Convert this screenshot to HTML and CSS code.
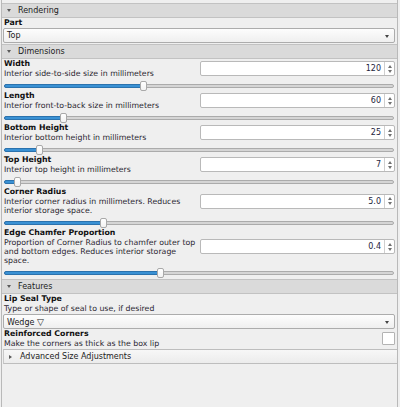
FILE: index.html
```html
<!DOCTYPE html>
<html>
<head>
<meta charset="utf-8">
<link rel="stylesheet" href="styles.css">
</head>
<body>
<div class="panel">
  <div class="ghead"><span class="tri-down"></span>Rendering</div>
  <div class="gbody">
    <div class="label">Part</div>
    <div class="select"><span>Top</span><span class="caret"></span></div>
  </div>

  <div class="ghead"><span class="tri-down"></span>Dimensions</div>
  <div class="gbody">
    <div class="row">
      <div class="text">
        <div class="label">Width</div>
        <div class="desc">Interior side-to-side size in millimeters</div>
      </div>
      <div class="spin"><span class="val">120</span><span class="arrows"><i class="up"></i><i class="dn"></i></span></div>
    </div>
    <div class="slider"><div class="track"><div class="fill" style="width:35.9%"></div><div class="handle" style="left:35.9%"></div></div></div>

    <div class="row">
      <div class="text">
        <div class="label">Length</div>
        <div class="desc">Interior front-to-back size in millimeters</div>
      </div>
      <div class="spin"><span class="val">60</span><span class="arrows"><i class="up"></i><i class="dn"></i></span></div>
    </div>
    <div class="slider"><div class="track"><div class="fill" style="width:15.1%"></div><div class="handle" style="left:15.1%"></div></div></div>

    <div class="row">
      <div class="text">
        <div class="label">Bottom Height</div>
        <div class="desc">Interior bottom height in millimeters</div>
      </div>
      <div class="spin"><span class="val">25</span><span class="arrows"><i class="up"></i><i class="dn"></i></span></div>
    </div>
    <div class="slider"><div class="track"><div class="fill" style="width:9.1%"></div><div class="handle" style="left:9.1%"></div></div></div>

    <div class="row">
      <div class="text">
        <div class="label">Top Height</div>
        <div class="desc">Interior top height in millimeters</div>
      </div>
      <div class="spin"><span class="val">7</span><span class="arrows"><i class="up"></i><i class="dn"></i></span></div>
    </div>
    <div class="slider"><div class="track"><div class="fill" style="width:3.3%"></div><div class="handle" style="left:3.3%"></div></div></div>

    <div class="row">
      <div class="text">
        <div class="label">Corner Radius</div>
        <div class="desc">Interior corner radius in millimeters. Reduces interior storage space.</div>
      </div>
      <div class="spin"><span class="val">5.0</span><span class="arrows"><i class="up"></i><i class="dn"></i></span></div>
    </div>
    <div class="slider"><div class="track"><div class="fill" style="width:25.6%"></div><div class="handle" style="left:25.6%"></div></div></div>

    <div class="row">
      <div class="text">
        <div class="label">Edge Chamfer Proportion</div>
        <div class="desc">Proportion of Corner Radius to chamfer outer top and bottom edges. Reduces interior storage space.</div>
      </div>
      <div class="spin"><span class="val">0.4</span><span class="arrows"><i class="up"></i><i class="dn"></i></span></div>
    </div>
    <div class="slider"><div class="track"><div class="fill" style="width:40.1%"></div><div class="handle" style="left:40.1%"></div></div></div>
  </div>

  <div class="ghead"><span class="tri-down"></span>Features</div>
  <div class="gbody feat">
    <div class="label">Lip Seal Type</div>
    <div class="desc">Type or shape of seal to use, if desired</div>
    <div class="select lip"><span>Wedge <span class="glyph">▽</span></span><span class="caret"></span></div>
    <div class="row">
      <div class="text">
        <div class="label">Reinforced Corners</div>
        <div class="desc">Make the corners as thick as the box lip</div>
      </div>
      <div class="check"></div>
    </div>
  </div>
  <div class="adv"><span class="tri-right"></span>Advanced Size Adjustments</div>
</div>
</body>
</html>
```
FILE: styles.css
```css
html, body {
  margin: 0;
  padding: 0;
  background: #efefef;
}
body {
  font-family: "DejaVu Sans", sans-serif;
  font-size: 7.8px;
  color: #222;
}
.panel {
  box-sizing: border-box;
  margin-left: 1px;
  width: 397px;
  height: 407px;
  padding-top: 3px;
  border-left: 1px solid #b9b9b9;
  border-right: 1px solid #b9b9b9;
}
.ghead {
  box-sizing: border-box;
  height: 15px;
  line-height: 13px;
  background: #dadada;
  border: 1px solid #c2c2c2;
  border-left: none;
  border-right: none;
  display: flex;
  align-items: center;
  padding-left: 5px;
  color: #222;
  font-size: 8px;
}
.tri-down {
  width: 0;
  height: 0;
  border-left: 2.5px solid transparent;
  border-right: 2.5px solid transparent;
  border-top: 3px solid #5a5a5a;
  margin-right: 7px;
}
.tri-right {
  width: 0;
  height: 0;
  border-top: 2.5px solid transparent;
  border-bottom: 2.5px solid transparent;
  border-left: 3px solid #5a5a5a;
  margin-right: 8px;
}
.gbody {
  padding: 0 2px 1px 1px;
}
.text {
  min-width: 0;
}
.label {
  font-weight: bold;
  line-height: 10px;
  padding-left: 1px;
  color: #111;
}
.desc {
  line-height: 9px;
  padding-left: 1px;
  color: #2a2630;
}
.select {
  box-sizing: border-box;
  height: 15px;
  border: 1px solid #acacac;
  border-radius: 2px;
  background: linear-gradient(#fdfdfd, #efefef);
  display: flex;
  align-items: center;
  justify-content: space-between;
  padding: 0 5px 0 3px;
  color: #1a1a1a;
  font-size: 8px;
}
.select.lip {
  margin-top: 1px;
}
.glyph {
  font-size: 9px;
}
.caret {
  width: 0;
  height: 0;
  border-left: 2.5px solid transparent;
  border-right: 2.5px solid transparent;
  border-top: 3px solid #444;
  margin-top: 1px;
}
.row {
  display: grid;
  grid-template-columns: 1fr 195px;
  align-items: center;
}
.spin {
  box-sizing: border-box;
  height: 15px;
  border: 1px solid #b9b9b9;
  border-radius: 2px;
  background: #fff;
  display: flex;
  justify-content: flex-end;
  align-items: stretch;
}
.spin .val {
  line-height: 13px;
  padding-right: 3px;
  color: #1e1e40;
  font-size: 8px;
}
.arrows {
  width: 9px;
  border-left: 1px solid #cfcfcf;
  display: flex;
  flex-direction: column;
  align-items: center;
  justify-content: center;
  gap: 2px;
}
.arrows i {
  display: block;
  width: 0;
  height: 0;
  border-left: 2.5px solid transparent;
  border-right: 2.5px solid transparent;
}
.arrows .up {
  border-bottom: 3px solid #707070;
}
.arrows .dn {
  border-top: 3px solid #707070;
}
.slider {
  height: 13px;
  padding: 6px 1px 0 1px;
  box-sizing: border-box;
}
.track {
  position: relative;
  box-sizing: border-box;
  height: 4px;
  border: 1px solid #ababab;
  border-radius: 2px;
  background: #d5d5d5;
}
.fill {
  position: absolute;
  left: -1px;
  top: -1px;
  height: 4px;
  box-sizing: border-box;
  border: 1px solid #2b72ad;
  border-radius: 2px;
  background: #3a91d4;
}
.handle {
  position: absolute;
  top: -4px;
  width: 7px;
  height: 10px;
  margin-left: -4px;
  box-sizing: border-box;
  border: 1px solid #a9a9a9;
  border-radius: 2px;
  background: linear-gradient(#ffffff, #f2f2f2);
}
.check {
  justify-self: end;
  width: 13px;
  height: 13px;
  box-sizing: border-box;
  border: 1px solid #b3b3b3;
  border-radius: 1px;
  background: #fff;
}
.adv {
  box-sizing: border-box;
  height: 15px;
  margin-left: 1px;
  background: linear-gradient(#f7f7f7, #ececec);
  border-top: 1px solid #bdbdbd;
  border-bottom: 1px solid #bdbdbd;
  border-left: 1px solid #c8c8c8;
  display: flex;
  align-items: center;
  padding-left: 5px;
  color: #222;
  font-size: 8px;
}
```
